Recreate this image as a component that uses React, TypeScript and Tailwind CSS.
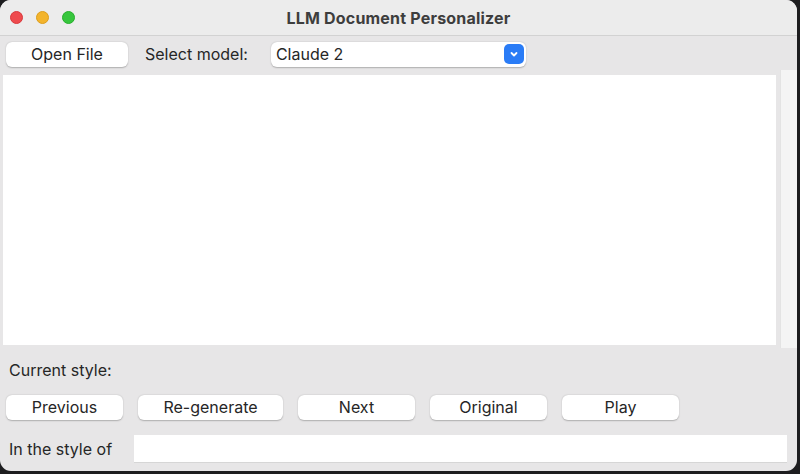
import React from "react";

function Btn({ label, w }: { label: string; w: string }) {
  return (
    <button
      className={`${w} h-[25px] rounded-[6px] bg-white text-[16px] leading-none text-[#262626] shadow-[0_0.5px_1.5px_rgba(0,0,0,0.25)] flex items-center justify-center`}
    >
      {label}
    </button>
  );
}

export default function App() {
  return (
    <div
      className="w-[800px] h-[474px] bg-[#1d1d1f] overflow-hidden"
      style={{ fontFamily: "Inter, 'Liberation Sans', sans-serif" }}
    >
      <div className="w-[797px] h-[471px] rounded-[11px] bg-[#e7e6e7] overflow-hidden flex flex-col">
        {/* Title bar */}
        <div className="relative h-[36px] shrink-0 bg-[#ececec] border-b border-[#d2d2d2] flex items-center">
          <div className="flex items-center gap-[13px] pl-[10px]">
            <span className="w-[13px] h-[13px] rounded-full bg-[#ee4b4e] border border-[#d8393c]" />
            <span className="w-[13px] h-[13px] rounded-full bg-[#f3b42c] border border-[#dc9d1c]" />
            <span className="w-[13px] h-[13px] rounded-full bg-[#37c63d] border border-[#27ae2c]" />
          </div>
          <div className="absolute inset-0 flex items-center justify-center text-[16px] font-bold tracking-[0.2px] text-[#3d3d3d]">
            LLM Document Personalizer
          </div>
        </div>

        {/* Toolbar */}
        <div className="h-[36px] shrink-0 flex items-center pl-[6px]">
          <Btn label="Open File" w="w-[122px]" />
          <span className="ml-[17px] text-[16px] text-[#262626]">Select model:</span>
          <div className="ml-[23px] w-[255px] h-[25px] rounded-[6px] bg-white shadow-[0_0.5px_1.5px_rgba(0,0,0,0.25)] flex items-center justify-between pl-[5px] pr-[2px]">
            <span className="text-[16px] text-[#262626]">Claude 2</span>
            <span className="w-[20px] h-[20px] rounded-[5px] bg-[#2a7cf6] flex items-center justify-center">
              <svg width="10" height="10" viewBox="0 0 10 10">
                <path d="M2.5 4 L5 6.5 L7.5 4" stroke="white" strokeWidth="1.8" fill="none" strokeLinecap="round" strokeLinejoin="round" />
              </svg>
            </span>
          </div>
        </div>

        {/* Text area + scrollbar */}
        <div className="h-[274px] shrink-0 flex">
          <div className="flex-1 pl-[3px] pt-[3px] pb-[1px] pr-[4px]">
            <div className="w-full h-full bg-white" />
          </div>
          <div className="w-[17px] mt-[-2px] mb-[-2px] bg-[#f4f4f4] border-l border-[#e3e3e3]" />
        </div>

        {/* Current style */}
        <div className="h-[46px] shrink-0 flex items-center pl-[9px] pt-[2px] text-[16px] text-[#262626]">
          Current style:
        </div>

        {/* Buttons */}
        <div className="h-[30px] shrink-0 flex items-center pl-[6px] gap-[15px]">
          <Btn label="Previous" w="w-[117px]" />
          <Btn label="Re-generate" w="w-[145px]" />
          <Btn label="Next" w="w-[117px]" />
          <Btn label="Original" w="w-[117px]" />
          <Btn label="Play" w="w-[117px]" />
        </div>

        {/* In the style of */}
        <div className="flex-1 flex items-center pl-[9px] pr-[10px] pt-[5px]">
          <span className="w-[125px] text-[16px] text-[#262626]">In the style of</span>
          <div className="flex-1 h-[28px] bg-white border-b border-[#d6d6d6]" />
        </div>
      </div>
    </div>
  );
}
